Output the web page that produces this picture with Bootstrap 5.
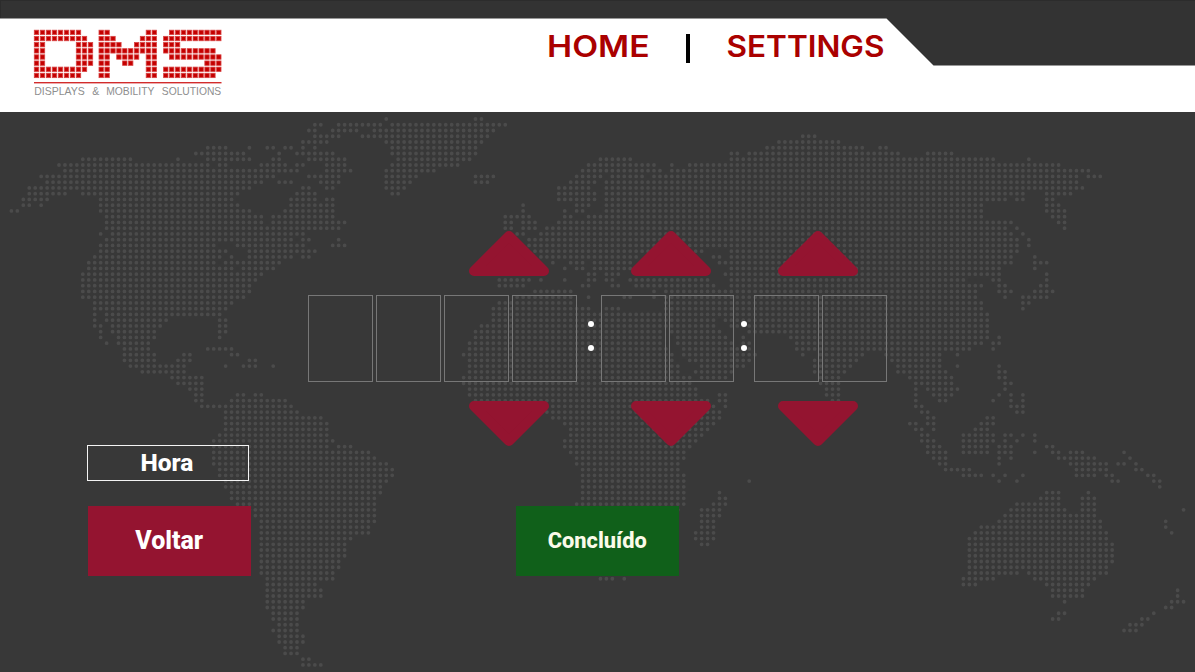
<!DOCTYPE html>
<html lang="pt">
<head>
<meta charset="utf-8">
<meta name="viewport" content="width=device-width, initial-scale=1">
<title>DMS - Hora</title>
<link href="https://cdn.jsdelivr.net/npm/bootstrap@5.3.0/dist/css/bootstrap.min.css" rel="stylesheet">
<style>
  body { background: #383838; font-family: Roboto, "Liberation Sans", sans-serif; width: 1195px; height: 672px; }
  .screen { width: 1195px; height: 672px; }
  .topbar { height: 112px; }
  .topbar-shape, .world { top: 0; left: 0; z-index: 0; }
  .topbar > .brand, .topbar > .menu { z-index: 1; }
  .brand { margin: 27px 0 0 31px; width: 194px; }
  .menu { margin: 30px 0 0 315px; }
  .menu svg { display: block; overflow: visible; }
  .menu-label { font: 600 29.6px Inter, "Liberation Sans", sans-serif; fill: #aa0000; }
  .divider { width: 4px; height: 29px; background: #000; margin: 4px 32px 0 32px; }
  .logo-text { font: 11.2px "Liberation Sans", sans-serif; fill: #8e8e8e; }
  .panel { height: 560px; z-index: 1; }
  .arrows { padding-left: 469px; height: 45px; }
  .arrows.up { margin-top: 119px; }
  .arrows.down { height: 44px; }
  .arrow { width: 80px; height: 45px; }
  .arrow svg { display: block; fill: #941430; stroke: #941430; stroke-width: 10; stroke-linejoin: round; }
  .down svg { transform: scaleY(-1); }
  .arrow-mid { margin-left: 81.5px; }
  .arrow-end { margin-left: 67.5px; }
  .digits { margin: 19px 0 19px 308px; height: 87px; }
  .digit { width: 65px; height: 87px; border: 1px solid #777; }
  .group { gap: 3px; }
  .colon { gap: 18px; padding-bottom: 5px; }
  .colon span { width: 6px; height: 6px; border-radius: 50%; background: #fff; }
  .colon-a { margin: 0 7.5px 0 10.5px; }
  .colon-b { margin: 0 7px 0 7px; }
  .mode { margin-left: 87px; width: 162px; height: 36px; border: 1px solid #f4f4f4; color: #fff; font-weight: 800; font-size: 24.5px; line-height: 1; padding-right: 2px; }
  .actions { margin: 24.5px 0 0 87.5px; gap: 264.5px; }
  .action { width: 163.5px; height: 70px; border: 0; border-radius: 0; padding: 0; font-weight: 800; line-height: 1; color: #fff; }
  .back { background: #941430; font-size: 25px; }
  .done { background: #10601a; font-size: 21.8px; color: #fbfbe9; }
</style>
</head>
<body class="m-0 overflow-hidden">
<div class="screen position-relative overflow-hidden">
  <svg class="world position-absolute" width="1195" height="672" aria-hidden="true">
    <path id="worldDots" fill="none" stroke="#4b4b4b" stroke-width="3.8" stroke-linecap="round"/>
  </svg>

  <header class="topbar position-relative d-flex align-items-start">
    <svg class="topbar-shape position-absolute" width="1195" height="112" aria-hidden="true">
      <rect width="1195" height="112" fill="#fff"/>
      <path d="M0 0H1195V65.6H933.5L886.5 18.6H0Z" fill="#333"/>
      <path d="M0 .5H1195M.5 0V18" stroke="#2c2c2c" fill="none"/>
    </svg>
    <a class="brand position-relative d-block" href="#" aria-label="DMS">
      <svg class="d-block" width="194" height="72" viewBox="31 27 194 72">
        <g id="logoDots"></g>
        <rect x="34" y="82" width="187.5" height="1.4" fill="#d22c2c"/>
        <text class="logo-text" y="95.2"><tspan x="34.2" textLength="50.6" lengthAdjust="spacingAndGlyphs">DISPLAYS</tspan><tspan x="92.2" textLength="7" lengthAdjust="spacingAndGlyphs">&amp;</tspan><tspan x="106.2" textLength="48.2" lengthAdjust="spacingAndGlyphs">MOBILITY</tspan><tspan x="161.8" textLength="59.4" lengthAdjust="spacingAndGlyphs">SOLUTIONS</tspan></text>
      </svg>
    </a>
    <nav class="menu position-relative d-flex align-items-start">
      <a href="#"><svg width="114" height="38"><text class="menu-label" x="7" y="27" textLength="102.6" lengthAdjust="spacingAndGlyphs">HOME</text></svg></a>
      <span class="divider"></span>
      <a href="#"><svg width="170" height="38"><text class="menu-label" x="4.5" y="27" textLength="158" lengthAdjust="spacingAndGlyphs">SETTINGS</text></svg></a>
    </nav>
  </header>

  <main class="panel position-relative d-flex flex-column">
    <div class="arrows up d-flex">
      <a class="arrow" href="#" aria-label="+"><svg width="80" height="45"><path d="M5 40H75L40 5Z"/></svg></a>
      <a class="arrow arrow-mid" href="#" aria-label="+"><svg width="80" height="45"><path d="M5 40H75L40 5Z"/></svg></a>
      <a class="arrow arrow-end" href="#" aria-label="+"><svg width="80" height="45"><path d="M5 40H75L40 5Z"/></svg></a>
    </div>
    <div class="digits d-flex">
      <div class="group d-flex"><div class="digit"></div><div class="digit"></div><div class="digit"></div><div class="digit"></div></div>
      <div class="colon colon-a d-flex flex-column justify-content-center"><span></span><span></span></div>
      <div class="group d-flex"><div class="digit"></div><div class="digit"></div></div>
      <div class="colon colon-b d-flex flex-column justify-content-center"><span></span><span></span></div>
      <div class="group d-flex"><div class="digit"></div><div class="digit"></div></div>
    </div>
    <div class="arrows down d-flex">
      <a class="arrow" href="#" aria-label="-"><svg width="80" height="45"><path d="M5 40H75L40 5Z"/></svg></a>
      <a class="arrow arrow-mid" href="#" aria-label="-"><svg width="80" height="45"><path d="M5 40H75L40 5Z"/></svg></a>
      <a class="arrow arrow-end" href="#" aria-label="-"><svg width="80" height="45"><path d="M5 40H75L40 5Z"/></svg></a>
    </div>
    <div class="mode d-flex align-items-center justify-content-center">Hora</div>
    <div class="actions d-flex">
      <button class="btn action back" type="button">Voltar</button>
      <button class="btn action done" type="button">Concluído</button>
    </div>
  </main>
</div>

<script>
// World map: one line per dot row, as column ranges.
const rows = `63 78-79
51-52 55-62 64-83
50-51 54-58 61-81
51-55 59-80 133-135
49-53 63-79 129-139
33-36 40 43-44 46-47 49 51 64-78 127-143 146-147
31-39 45 48-54 64-78 121-122 124-149 154-158
12-20 28 33-40 44-45 50-56 65-77 99-104 121-165 171
8-33 35-36 42-46 48-49 53-56 64-75 97-108 111 114-176
9-48 53-57 63-71 96-109 111-181
5-44 50-55 63-68 78-81 95-99 101-106 108-179 181-183
6-42 45-47 52-55 63-67 78-80 94-98 100-179
3-40 49-50 53-54 63-66 92-97 100-180
3-9 12-38 48-51 64-65 92-98 100-170 174-178
2-6 15-37 47-51 53-54 92-98 100-167 169-170 174-175
2-3 5 15-38 47-54 86 95-97 100-163 174-176
0-1 15-40 46-54 86 93 95-96 100-163 174-177
16-42 44-54 83-87 93-94 97-163 175-177
16-42 44-56 83-84 86-88 92-168 176-177
16-55 83-84 86-88 90-167 169 177
15 17-49 85-86 89-168 170
16-47 49-50 55 87-169 171
15-34 38-49 54-56 87-169 171
15-36 40-51 88-116 121-169
14-35 37 40-47 49-50 89-105 118-119 121-168 172
13-34 36-45 91 94-96 98-104 119-168 172-174
13-37 39-44 93 95-96 98-104 121-166 172
12-42 97-98 100-102 120-166 174
12-41 82-87 89 93 97-98 100-101 104-117 121-160 165-166 174
12-40 82-86 96-97 101-102 105-118 121-163 166-167 173-174
12-40 88-94 108 110-162 166-168 172-175
12-39 85-94 97 103-104 108 110-162 167 170-174
14-37 82-94 110-163 170-171
14-36 81-97 100-102 110-163 170
14 16-35 81-164
14 16-26 35-36 81-118 120-164
14-15 17-25 35-36 79-118 121-164
15 17-24 35-36 78-109 111-119 124-164
15 18-24 35 78-109 112-120 123 131-164 166
16 18-23 77-109 112-121 123-124 132-163 165-166
19-23 33-37 77-110 113-124 132-161 165
19-24 29-30 37-38 76-111 113-125 133 136-143 147-156 159
19-24 28-30 40-41 77-111 114-124 135-142 148-156
20-29 36 39-41 44 77-112 116-123 135-141 149-156 159 166
22-29 77-112 115-121 135-140 149-157 166-167
27-32 76-114 116-120 136-139 151-158 166-167
28-32 76-114 136-139 152-158 167-168
30-32 77-115 137-139 152 154-159 167
31-32 38-39 41-42 77-115 119-120 137-139 152 155-158 166 168 170
31-32 37-46 78-117 119-120 138-139 152 156-157 165 168 170
32-47 90-118 120 152-153 168-170
36-48 90-119 153-154 169-170
36-52 91-119 154-155 164-165
36-53 93-118 151-152 154-155 163-165
36-53 94-117 152-153 155 162-164
35-53 94-116 153-154 160-165 167-168 170 172
34-54 93-115 153-155 160-165 167 169 172
34-53 55-57 93-114 154-156 160-164 166-168 174-175
34-60 94-113 154-157 160-164 166-168 172 175-176 178-180 187
34-61 95-113 155-157 166 168 176-182 188
34-63 95-112 156-157 166 178-184 186-187 189
35-64 96-112 157-161 179-184 189-190
35-64 96-113 160-163 165 167 170 179-182 184-185 191-192
36-63 96-113 124 166 169 185-186 192-193
36-62 96-113 193
37-62 96-113 119 174-176 181
37-61 96-113 119-120 173-176 180-182
38-61 95-113 118-120 169-176 180-182
40-61 112 116-119 168-177 180-182 197
41-61 116-119 167-182
42-61 116-118 166-183 194
42-60 116-118 163-183 194
42-60 115-118 162-184 195
42-57 115-118 161-184
42-56 116-117 161-185
42-56 161-185
42-56 161-185
42-55 161-185
42-55 161-184
42-54 161-169 171-184
43-54 99-101 103 160-165 172-182
43-51 160-162 174-181
43-52 175-180 196
43-52 175-180 196
43-49 177 195-197
43-49 194-195
44-48 176-177 192
44-48 175-176 190-191
45-48 188-190
44-48 187-189
45-49
45-49
46-48
46-48
49-50
49-52`.split("\n");
let d = "";
rows.forEach((row, r) => row.trim().split(" ").forEach(run => {
  const [a, b = a] = run.split("-").map(Number);
  for (let c = a; c <= b; c++) d += `M${(11.4 + c * 5.95).toFixed(2)} ${(119 + r * 5.747).toFixed(2)}h.01`;
}));
document.getElementById("worldDots").setAttribute("d", d);

// Logo letters on a 10 x 8 grid of squares.
const letters = [
  [36.5, 6, ["11111111..","111111111.","11.....111","11.....111","11.....111","11.....111","111111111.","11111111.."]],
  [101.2, 5.9, ["11......11","111....111","1111..1111","1111111111","11.1111.11","11..11..11","11......11","11......11"]],
  [165.8, 5.89, [".111111111","1111111111","111.......","111111111.",".111111111",".......111","1111111111","111111111."]]
];
let squares = "";
letters.forEach(([x0, step, grid]) => grid.forEach((line, r) => [...line].forEach((ch, c) => {
  if (ch === "1") squares += `<rect x="${(x0 + c * step - 2.2).toFixed(2)}" y="${(32.4 + r * 6.15 - 2.2).toFixed(2)}" width="4.4" height="4.4" fill="#c40000" stroke="#d94444" stroke-width=".8"/>`;
})));
document.getElementById("logoDots").innerHTML = squares;
</script>
<script src="https://cdn.jsdelivr.net/npm/bootstrap@5.3.0/dist/js/bootstrap.bundle.min.js"></script>
</body>
</html>
